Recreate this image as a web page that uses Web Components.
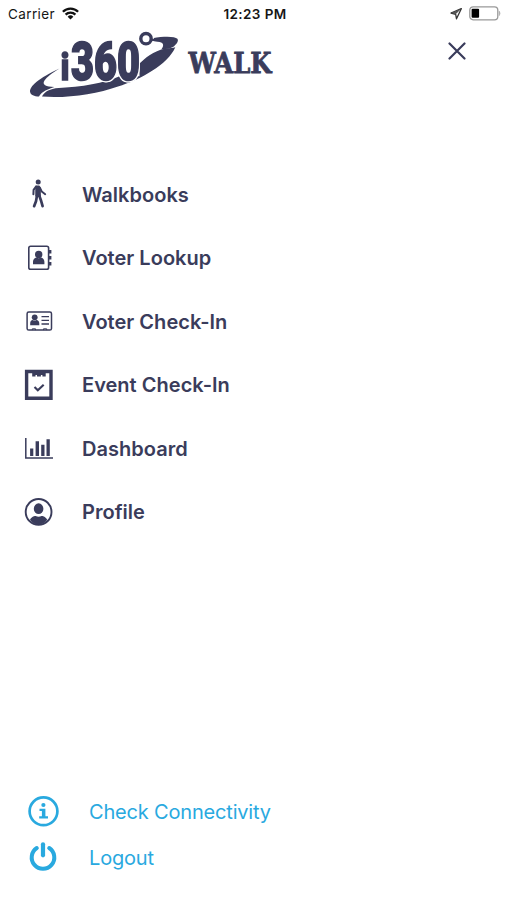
<!DOCTYPE html>
<html lang="en">
<head>
<meta charset="utf-8">
<title>i360 Walk</title>
<style>
html,body{margin:0;background:#fff}
body{font-family:Inter,"Liberation Sans",sans-serif;color:#3a3c5b}
</style>
</head>
<body>
<walk-menu></walk-menu>
<script>
const define = (name, html) => customElements.define(name, class extends HTMLElement {
  constructor() {
    super();
    this.attachShadow({mode: 'open'}).innerHTML = html;
  }
});

const ICONS = {
  walk: `<g fill="none" stroke="currentColor" stroke-linecap="round" stroke-linejoin="round"><circle cx="14.2" cy="3.1" r="2.5" fill="currentColor" stroke="none"/><path d="M12.2 7.4h2.8l.9 3v6.3h-3.7z" fill="currentColor" stroke-width="1.9"/><path d="M12 7.6l-2.4 3.2-.2 4.4" stroke-width="2"/><path d="M15.8 8.4l1.9 4 3.500 2.800" stroke-width="1.9"/><path d="M13 16.5l-1 5.700-1.900 5M15.2 16.5l1.900 5.300 1.500 5.400" stroke-width="2.700"/></g>`,
  book: `<rect x="4.8" y="3.2" width="19.8" height="23.1" rx="1.8" fill="none" stroke="currentColor" stroke-width="1.6"/><path d="M25 7h2.400v3.500H25zm0 6h2.400v3.500H25zm0 6h2.400v3.500H25z" fill="currentColor"/><circle cx="14.7" cy="11.500" r="3.7" fill="currentColor"/><path d="M9 21.200v-2.4c0-2.5 1.4-3.8 3.4-4.3q2.3 1.5 4.6 0c2 .5 3.4 1.8 3.4 4.3v2.4z" fill="currentColor"/>`,
  card: `<rect x="3.100" y="6.100" width="24.4" height="18" rx="1.7" fill="none" stroke="currentColor" stroke-width="1.5"/><path d="M8.300 24.100v-1.3h3.2v1.3M19.5 24.100v-1.3h3.2v1.3" fill="none" stroke="currentColor"/><circle cx="10.700" cy="11.300" r="2.900" fill="currentColor"/><path d="M6.200 19.300v-1.9c0-2 1-3 2.6-3.3q1.8 1 3.6 0c1.6.3 2.9 1.3 2.9 3.3v1.900z" fill="currentColor"/><path d="M17.500 10.600h7.5M17.500 14.300h7.5M17.500 18h7.5" stroke="currentColor" stroke-width="1.3"/>`,
  event: `<path d="M2.600 1.500h24.400v26.700H2.600z" fill="none" stroke="currentColor" stroke-width="3.400"/><path d="M8.200 1.500h13.500v5h-3.300V5h-1.500v1.500h-3.900V5h-1.500v1.500H8.200z" fill="currentColor"/><path d="M10.500 17l3.300 3.300 5.900-5.600" fill="none" stroke="currentColor" stroke-width="2.100"/>`,
  chart: `<path d="M1.800 4.900v20h27.200" fill="none" stroke="currentColor" stroke-width="1.5"/><path d="M6.100 15.600h3.200v7.300H6.100zm5.500-7.3h3.400v14.6h-3.400zm5.600 3.5h3.3v11.1h-3.3zm5.300-5.6h3.3v16.7h-3.300z" fill="currentColor"/>`,
  profile: `<circle cx="14.6" cy="14.900" r="12.900" fill="none" stroke="currentColor" stroke-width="1.9"/><ellipse cx="14.6" cy="11.700" rx="4.8" ry="5.4" fill="currentColor"/><path d="M6 22.700c1.8-3.3 5-3.7 5.6-3.7q3 1.4 6 0c.6 0 3.8.4 5.6 3.7-2.5 3.4-5.7 4.8-8.6 4.8S8.500 26.100 6 22.700z" fill="currentColor"/>`,
  info: `<circle cx="15.500" cy="15.300" r="13.900" fill="none" stroke="currentColor" stroke-width="2.700"/><circle cx="15.400" cy="9" r="2.100" fill="currentColor"/><path d="M11.500 12.700h5.900v7.500h2.600v2.400h-8.800v-2.400h2.700v-5.100h-2.400z" fill="currentColor"/>`,
  power: `<path d="M8.800 6a11.300 11.300 0 1 0 12.400 0" fill="none" stroke="currentColor" stroke-width="4" stroke-linecap="round"/><path d="M15 2.300v11" fill="none" stroke="currentColor" stroke-width="4.200" stroke-linecap="round"/>`
};

customElements.define('menu-icon', class extends HTMLElement {
  connectedCallback() {
    const s = this.getAttribute('size');
    this.attachShadow({mode: 'open'}).innerHTML =
      `<style>:host{display:block;width:${s}px;height:${s}px}svg{display:block;overflow:visible}</style><svg width="${s}" height="${s}" viewBox="0 0 ${s} ${s}">${ICONS[this.getAttribute('name')]}</svg>`;
  }
});

define('status-bar', `<style>
:host{display:grid;grid-template-columns:1fr auto 1fr;align-items:center;height:27px;padding:0 6px 0 8px;color:#161616;font-size:13.500px}
.left,.right{display:flex;align-items:center}
.left{gap:7px}.right{justify-content:flex-end;gap:7px}
.carrier{letter-spacing:.38px}
b{font-weight:600;font-size:13.500px;letter-spacing:.4px;padding-left:1px}
svg{display:block}
</style>
<div class="left"><span class="carrier">Carrier</span>
<svg width="17" height="13" viewBox="0 0 17 13"><g fill="none" stroke="#111" stroke-width="2.300"><path d="M.9 4.700a10.700 10.700 0 0 1 15.200 0M3.600 7.600a6.900 6.900 0 0 1 9.800 0"/></g><path d="M5.600 9.700a4.100 4.100 0 0 1 5.800 0L8.500 12.600z" fill="#111"/></svg></div>
<b>12:23 PM</b>
<div class="right">
<svg width="12" height="12" viewBox="0 0 12 12"><path d="M11.300.7L1 5l4.700 1.300.8 4.500z" fill="none" stroke="#333" stroke-width="1.300" stroke-linejoin="round"/><path d="M11.300.7L1 5l4.700 1.300z" fill="#555"/></svg>
<svg width="32" height="15" viewBox="0 0 32 15"><rect x=".8" y=".8" width="28" height="13" rx="3.300" fill="#fff" stroke="#999" stroke-width="1.300"/><rect x="2.600" y="2.800" width="7.500" height="9" rx="1" fill="#000"/><path d="M30.300 5.200q1.500 2.200 0 4.400z" fill="#999" stroke="#999" stroke-width=".5"/></svg></div>`);

define('brand-logo', `<style>:host{display:block}svg{display:block;overflow:visible}
.mark{filter:drop-shadow(1px 0 0 #fff) drop-shadow(-1px 0 0 #fff) drop-shadow(0 1px 0 #fff)}</style>
<svg width="250" height="76" viewBox="24 27 250 76" fill="#3a3c5b">
<path d="M59.500 68.500C39 78 29 86.500 30.200 92.200c.4 2.500 4 4.100 8.800 4.300 2-3.500 5.200-6.100 15.300-9.500-8.500-.2-12.600-2.300-9.800-6.500 2.500-3.600 7-6.900 15-12z"/>
<path d="M42 96.600c1.800-4 5.500-6.700 13.500-8.400 28-1.500 48-5 64-12h20V63.500c6-5 13-12.500 26.500-14.900 4.200-.4 6.800-.4 9.300-1.300C168 64.500 140 80 118 86.500 96 94.500 66 98.500 42 96.600z"/>
<path d="M152.500 38.300c13-2.400 22.500-1.700 24.900.5 1.700 2.300-1.200 6-4.500 8.300-3 1.700-6.700 2.300-11.500 2.200 2.700-3.600 2.600-6.800-2.800-7.600l-7.200-1z"/>
<g class="mark" font-family="Roboto,'Liberation Sans',sans-serif" font-weight="900" stroke="#3a3c5b" stroke-width="1.700" stroke-linejoin="miter">
<text x="60.700" y="79.500" font-size="37" textLength="8.500" lengthAdjust="spacingAndGlyphs">i</text>
<text x="71" y="79.500" font-size="54" textLength="69" lengthAdjust="spacingAndGlyphs">360</text></g>
<circle cx="146" cy="38.700" r="5.300" fill="#fff" stroke="#fff" stroke-width="5"/><path d="M150 39.200l9-.6v3l-9-.8z"/><circle cx="146" cy="38.700" r="5.200" fill="#fff" stroke="#3a3c5b" stroke-width="3.400"/>
<text x="188.500" y="72.900" font-family="'DejaVu Serif',serif" font-weight="700" font-size="27" textLength="83" lengthAdjust="spacingAndGlyphs" stroke="#3a3c5b" stroke-width=".8">WALK</text>
</svg>`);

define('close-button', `<style>:host{display:block}svg{display:block}</style>
<svg width="18" height="18" viewBox="0 0 18 18"><path d="M1.500 1.500l15 15m0-15l-15 15" fill="none" stroke="#3a3c5b" stroke-width="2.200" stroke-linecap="round"/></svg>`);

define('menu-item', `<style>
:host{display:flex;align-items:center;height:63.500px;gap:28px;padding-left:24px;font-size:20px;font-weight:560;letter-spacing:.02px;line-height:26px;white-space:nowrap}
span{padding-top:.8px}
</style><slot name="icon"></slot><span><slot></slot></span>`);

define('footer-link', `<style>
:host{display:flex;align-items:center;height:46.500px;gap:30px;padding-left:28px;font-size:20px;letter-spacing:-.18px;line-height:26px;color:#29a9df;white-space:nowrap}
span{padding-top:.8px}
</style><slot name="icon"></slot><span><slot></slot></span>`);

define('walk-menu', `<style>
:host{display:flex;flex-direction:column;width:507px;height:900px;overflow:hidden;background:#fff}
header{display:flex;justify-content:space-between;align-items:flex-start;height:135.500px;padding:0 41px 0 24px}
close-button{margin-top:15px}
nav{flex:1}
footer{padding-bottom:19px}
</style>
<status-bar></status-bar>
<header><brand-logo></brand-logo><close-button></close-button></header>
<nav>
<menu-item><menu-icon slot="icon" name="walk" size="30"></menu-icon>Walkbooks</menu-item>
<menu-item><menu-icon slot="icon" name="book" size="30"></menu-icon>Voter Lookup</menu-item>
<menu-item><menu-icon slot="icon" name="card" size="30"></menu-icon>Voter Check-In</menu-item>
<menu-item><menu-icon slot="icon" name="event" size="30"></menu-icon>Event Check-In</menu-item>
<menu-item><menu-icon slot="icon" name="chart" size="30"></menu-icon>Dashboard</menu-item>
<menu-item><menu-icon slot="icon" name="profile" size="30"></menu-icon>Profile</menu-item>
</nav>
<footer>
<footer-link><menu-icon slot="icon" name="info" size="31"></menu-icon>Check Connectivity</footer-link>
<footer-link><menu-icon slot="icon" name="power" size="31"></menu-icon>Logout</footer-link>
</footer>`);
</script>
</body>
</html>
